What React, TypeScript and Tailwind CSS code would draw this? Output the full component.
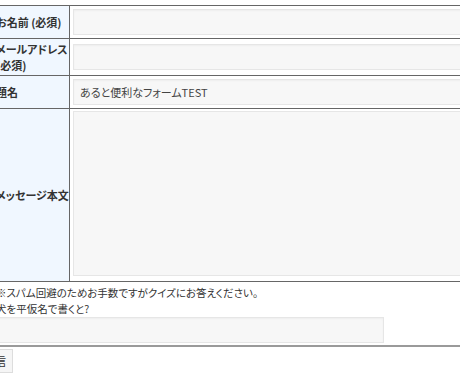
const FONT = { fontFamily: '"Noto Sans CJK JP", "Noto Sans", sans-serif' }

const inputCls =
  'block w-full h-[26px] border border-[#e6e6e6] bg-[#f7f7f7] px-[6px] text-[11px] text-[#444] shadow-[inset_0_1px_2px_rgba(0,0,0,0.04)] outline-none'

function Row({ label, children, tall }: { label: React.ReactNode; children: React.ReactNode; tall?: boolean }) {
  return (
    <div className="grid grid-cols-[84px_1fr] border-t border-[#666]">
      <div className="flex items-center whitespace-nowrap border-r border-[#666] bg-[#f0f7ff] py-[2px] pl-[10px] text-[11px] font-bold leading-4 text-[#333]">
        {label}
      </div>
      <div className={tall ? 'pb-[5px] pl-[3px] pt-[2px]' : 'flex items-center py-[3px] pl-[3px]'}>{children}</div>
    </div>
  )
}

export default function App() {
  return (
    <div className="h-[380px] w-[460px] overflow-hidden bg-white [font-feature-settings:'palt']" style={FONT}>
      <div className="-ml-[14px] w-[500px] pt-[5px]">
        {/* ── Form table ─────────────────────────────── */}
        <Row label="お名前 (必須)">
          <input className={inputCls} />
        </Row>
        <Row label={<span>メールアドレス<br />(必須)</span>}>
          <input className={inputCls} />
        </Row>
        <Row label="題名">
          <input className={inputCls} defaultValue="あると便利なフォームTEST" />
        </Row>
        <Row label="メッセージ本文" tall>
          <textarea className="block h-[165px] w-full resize-none border border-[#e6e6e6] bg-[#f7f7f7] outline-none" />
        </Row>

        {/* ── Quiz ───────────────────────────────────── */}
        <div className="border-b-2 border-t border-b-[#9a9a9a] border-t-[#666] pb-[2px] pl-[10px] pt-[3px] text-[10.5px] leading-4 text-[#333]">
          <p>※スパム回避のためお手数ですがクイズにお答えください。</p>
          <p>犬を平仮名で書くと?</p>
          <input className={inputCls + ' !w-[388px]'} />
        </div>

        <button className="ml-[-9px] mt-[1px] h-[24px] border border-[#ddd] bg-[#f5f5f5] px-[6px] text-[11px] text-[#333]">
          送信
        </button>
      </div>
    </div>
  )
}
